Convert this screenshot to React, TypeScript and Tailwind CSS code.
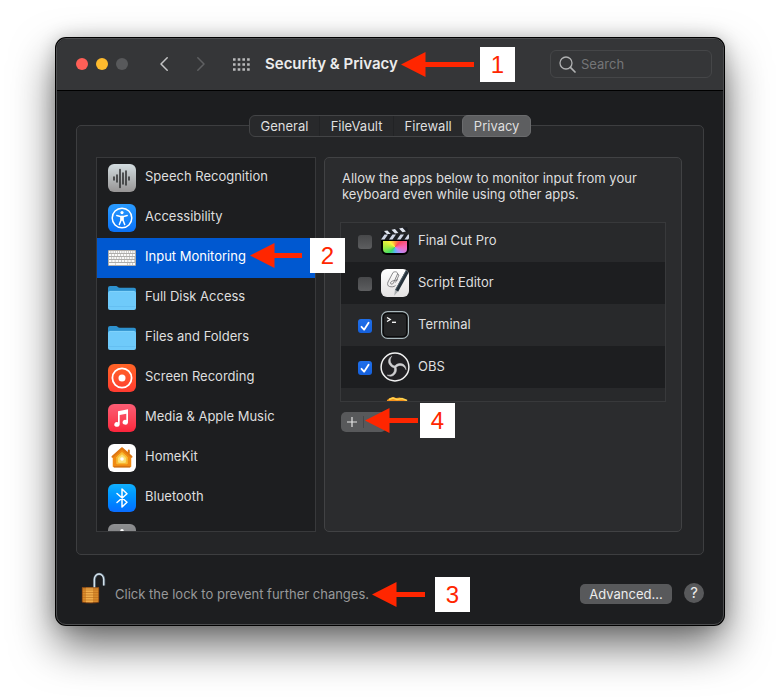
import { useState, type ReactNode } from "react";

function Tile({ className, children }: { className: string; children: ReactNode }) {
  return (
    <span className={`flex size-7 items-center justify-center overflow-hidden rounded-md ${className}`}>
      {children}
    </span>
  );
}

function SpeechIcon() {
  return (
    <Tile className="bg-linear-to-b from-[#d3dde0] to-[#979595]">
      <svg viewBox="0 0 28 28" className="size-7" stroke="#2a2b2d" strokeWidth="1.5" strokeLinecap="round">
        <path d="M6 13v3M9 11v7M12 5.5v18M15 9v11M18 7v14M21 13v3" />
      </svg>
    </Tile>
  );
}

function AccessibilityIcon() {
  return (
    <Tile className="bg-linear-to-b from-[#2a9bff] to-[#0a70f5]">
      <svg viewBox="0 0 28 28" className="size-7" fill="none" stroke="#fff" strokeLinecap="round" strokeLinejoin="round">
        <circle cx="14" cy="14" r="9.8" strokeWidth="1.5" />
        <circle cx="14" cy="8.6" r="1.6" fill="#fff" stroke="none" />
        <path d="M8.8 11.6l3.6.8h3.2l3.6-.8" strokeWidth="1.5" />
        <path d="M14 12.6v3.4M12.9 13v3.4l-1.6 4.2M15.1 13v3.4l1.6 4.2" strokeWidth="1.5" />
      </svg>
    </Tile>
  );
}

function KeyboardIcon() {
  return (
    <svg viewBox="0 0 28 28" className="size-7">
      <rect x="0" y="6" width="28" height="16" rx="1" fill="#aeadab" />
      <g stroke="#fafafa" strokeWidth="2.2">
        <path d="M1 8h26" strokeDasharray="1.6 .6" />
        <path d="M1 11h26" strokeDasharray="2.4 .6" />
        <path d="M1 14h26" strokeDasharray="2 .6" />
        <path d="M1 17h26" strokeDasharray="2.6 .6" />
        <path d="M1 20h6.5M8 20h11M19.6 20h2M22.2 20h2M24.8 20h2.2" />
      </g>
    </svg>
  );
}

function FolderIcon() {
  return (
    <svg viewBox="0 0 28 28" className="size-7">
      <path d="M0 4a2 2 0 0 1 2-2h6c1.600 0 2 1.800 3.800 1.800H26a2 2 0 0 1 2 2V12H0z" fill="#2e92cf" />
      <rect x="0" y="7" width="28" height="19" rx="2" fill="#6fcafa" />
      <path d="M.5 22.500h27" stroke="#63bdf0" strokeWidth=".8" />
      <path d="M1.500 7.300h25" stroke="#93dafc" strokeWidth=".6" />
    </svg>
  );
}

function RecordingIcon() {
  return (
    <Tile className="bg-linear-to-b from-[#ff6426] to-[#ff3a30]">
      <svg viewBox="0 0 28 28" className="size-7">
        <circle cx="14" cy="14" r="9.600" fill="none" stroke="#fff" strokeWidth="1.800" />
        <circle cx="14" cy="14" r="3.500" fill="#fff" />
      </svg>
    </Tile>
  );
}

function MusicIcon() {
  return (
    <Tile className="bg-linear-to-b from-[#fb5c74] to-[#fa233b]">
      <svg viewBox="0 0 28 28" className="size-7" fill="#fff">
        <path d="M10 7.300L20 5.200V18.500a2.700 2.400 0 1 1-1.700-2.500V9.700L11.700 11v9.600a2.700 2.400 0 1 1-1.700-2.400z" />
      </svg>
    </Tile>
  );
}

function HomeIcon() {
  return (
    <Tile className="bg-white">
      <svg viewBox="0 0 28 28" className="size-7" strokeLinejoin="round">
        <path d="M14 4.500L5.500 12v10.500h17V12z" fill="#f08a12" stroke="#f08a12" strokeWidth="1.500" />
        <path d="M4.500 12.800L14 4.300l9.500 8.500M20.800 6.500v3" fill="none" stroke="#dd7611" strokeWidth="2" strokeLinecap="round" />
        <path d="M6 22.800h16" stroke="#c96a12" strokeWidth="1.200" />
        <path d="M14 8.500L8.800 13v6.800h10.400V13z" fill="#f9bd35" stroke="#f9bd35" />
        <path d="M14 10.800L10.700 13.700v4.600h6.600v-4.600z" fill="#fbe27b" stroke="#fbe27b" />
        <circle cx="14" cy="15" r="1.800" fill="#fff" />
      </svg>
    </Tile>
  );
}

function BluetoothIcon() {
  return (
    <Tile className="bg-linear-to-b from-[#12b0fd] to-[#0a6cff]">
      <svg viewBox="0 0 28 28" className="size-7" fill="none" stroke="#fff" strokeWidth="1.500" strokeLinejoin="round" strokeLinecap="round">
        <path d="M9 9.500l10 8.800-5 4.700V5l5 4.700-10 8.800" />
      </svg>
    </Tile>
  );
}

function GearIcon() {
  return (
    <Tile className="bg-linear-to-b from-[#8f9092] to-[#6b6c6e]">
      <svg viewBox="0 0 28 28" className="size-7" fill="none" stroke="#fff">
        <circle cx="14" cy="16" r="7" strokeWidth="2" />
        <path d="M12.300 7.500V6.500a1.700 1.500 0 0 1 3.400 0v1z" fill="#fff" stroke="none" />
      </svg>
    </Tile>
  );
}

function FinalCutIcon() {
  return (
    <span className="flex size-7 flex-col">
      <svg viewBox="0 0 28 13" className="h-[13px] w-7">
        <path d="M0 4.500L26 0l1.500 4.500L1 9z" fill="#1d1f24" />
        <path d="M3 4l3.500 3.800 3.400-.6L6.500 3.400zM10.500 2.700L14 6.500l3.400-.6L14 2.100zM18 1.400l3.500 3.800 3.400-.6L21.500.8z" fill="#dfe4ee" />
        <path d="M0 7h28v6H0z" fill="#1d1f24" />
        <path d="M0 12.500L3.500 7.500H7L3.500 12.500zM8 12.500l3.500-5H15l-3.500 5zM16 12.500l3.500-5H23l-3.500 5zM23.500 12.500L27 7.500h1v3.800l-1 1.200z" fill="#cfd6e6" />
      </svg>
      <span className="flex flex-1 rounded-b-md bg-black p-0.5 pt-px">
        <span className="flex-1 rounded-b-sm bg-[conic-gradient(#ff9a3c,#fb4a5c,#f766b8,#b58cf5,#58b4f7,#3ddc6a,#a9ea3f,#fff23c,#ff9a3c)]" />
      </span>
    </span>
  );
}

function ScriptEditorIcon() {
  return (
    <Tile className="bg-linear-to-b from-white to-[#e4e2e2]">
      <svg viewBox="0 0 28 28" className="size-7" fill="none">
        <path d="M12 3.500c2-1.500 5-.5 4.500 1.500L12.500 14c-.8 1.500-3 1.500-3 0 0-1 1-1.500 2-2 2-1 4 0 5.500-1.500M12 3.500L7 13c-.8 2-.5 4 1.500 4.500M16 4.500l2 1.500-3.500 7.500M8.500 17.500c2 .5 4.500.5 6-1" stroke="#6d6d70" strokeWidth=".8" />
        <path d="M27 1L15.500 22" stroke="#26323b" strokeWidth="3.600" />
        <path d="M25.500 1L14.500 21" stroke="#5c6c76" strokeWidth=".8" />
        <path d="M14 20.800l3 1.800-3.800 4.200z" fill="#a9adb0" />
      </svg>
    </Tile>
  );
}

function TerminalIcon() {
  return (
    <svg viewBox="0 0 28 28" className="size-7" fill="none">
      <rect x=".6" y=".6" width="26.800" height="26.800" rx="6" fill="#0b0b0c" stroke="#a9b8bc" strokeWidth="1.200" />
      <rect x="3" y="3" width="22" height="22" rx="3.500" fill="#242526" />
      <path d="M6 6.500l3.300 2L6 10.500" stroke="#fff" strokeWidth="1.300" />
      <path d="M11 11.300h4" stroke="#fff" strokeWidth="1.300" />
    </svg>
  );
}

const obsBlade =
  "M10.800 3.200C7.600 5 6.800 8.200 8.200 11c1.100 2.200 3.200 3.600 5.600 3.900l.6-1.700c-2-.4-3.900-1.600-4.700-3.600-.9-2.300-.3-4.700 1.100-6.400z";

function ObsIcon() {
  return (
    <svg viewBox="0 0 28 28" className="size-7 overflow-visible" fill="none">
      <circle cx="14" cy="14" r="13.900" fill="#222124" stroke="#f2f2f2" strokeWidth="1.500" />
      <g fill="#d0d0d2" stroke="#d0d0d2" strokeWidth=".5">
        <path d={obsBlade} />
        <path d={obsBlade} transform="rotate(120 14 14)" />
        <path d={obsBlade} transform="rotate(240 14 14)" />
      </g>
    </svg>
  );
}

function OrangeIcon() {
  return (
    <svg viewBox="0 0 28 28" className="size-7">
      <path d="M6 5l3-2 3-1 3 1 4-.5 3 1.500 5 2v16H5z" fill="#f5931c" />
      <path d="M8 4.500l4-1.500 4 1.500 5-1 5 2" fill="none" stroke="#ffd44f" strokeWidth="1.500" />
    </svg>
  );
}

function LockIcon() {
  return (
    <svg viewBox="0 0 26 32" className="h-8 w-[26px]" fill="none">
      <path d="M14.500 16V7.500a4.700 5.500 0 0 1 9.400 0V13.500" stroke="#5e6f7d" strokeWidth="2.600" />
      <path d="M14.300 16V7.500a4.700 5.500 0 0 1 9.400 0V13.500" stroke="#d9e6ef" strokeWidth="1.300" />
      <path d="M2 15.500h17v14.300c-4 1.200-12 1.200-17 0z" fill="#d88a2b" />
      <path d="M6 15.500h7v15H6z" fill="#f0ad4a" />
      <path d="M2 18h17M2 20.500h17M2 23h17M2 25.500h17M2 28h17" stroke="#b56a1c" strokeWidth=".6" />
      <path d="M2 15.800h17M2.300 15.500v14.500M18.700 15.500v14.500M2 30.200c5 1 13 1 17 0" stroke="#8a4512" strokeWidth=".8" />
    </svg>
  );
}

const sections = [
  { name: "Speech Recognition", icon: <SpeechIcon /> },
  { name: "Accessibility", icon: <AccessibilityIcon /> },
  { name: "Input Monitoring", icon: <KeyboardIcon /> },
  { name: "Full Disk Access", icon: <FolderIcon /> },
  { name: "Files and Folders", icon: <FolderIcon /> },
  { name: "Screen Recording", icon: <RecordingIcon /> },
  { name: "Media & Apple Music", icon: <MusicIcon /> },
  { name: "HomeKit", icon: <HomeIcon /> },
  { name: "Bluetooth", icon: <BluetoothIcon /> },
  { name: "", icon: <GearIcon /> },
];

const apps = [
  { name: "Final Cut Pro", icon: <FinalCutIcon />, allowed: false },
  { name: "Script Editor", icon: <ScriptEditorIcon />, allowed: false },
  { name: "Terminal", icon: <TerminalIcon />, allowed: true },
  { name: "OBS", icon: <ObsIcon />, allowed: true },
  { name: "", icon: <OrangeIcon />, allowed: false },
];

const tabs = ["General", "FileVault", "Firewall", "Privacy"];

function AppRow({ name, icon, allowed }: { name: string; icon: ReactNode; allowed: boolean }) {
  return (
    <li className="odd:bg-[#28292b]">
      <label className="flex h-[42px] items-center pl-[17px]">
        <span className="mr-[9px] grid pt-0.5">
          <input
            type="checkbox"
            defaultChecked={allowed}
            aria-label={name || "App"}
            className="peer col-start-1 row-start-1 size-3.5 appearance-none rounded-[3px] bg-linear-to-b from-[#47484a] to-[#5d5e60] checked:from-[#1f6fea] checked:to-[#1560dc]"
          />
          <svg
            viewBox="0 0 14 14"
            className="pointer-events-none invisible col-start-1 row-start-1 size-3.5 peer-checked:visible"
            fill="none"
            stroke="#fff"
            strokeWidth="1.800"
            strokeLinecap="round"
            strokeLinejoin="round"
          >
            <path d="M3.500 7.800l2.600 2.900 4.500-7" />
          </svg>
        </span>
        {icon}
        <span className="ml-[9px] pb-0.5">{name}</span>
      </label>
    </li>
  );
}

function Callout({ label, length, className }: { label: string; length: number; className: string }) {
  return (
    <div className={`pointer-events-none absolute z-20 flex items-center ${className}`}>
      <svg width={length} height="25" viewBox={`0 0 ${length} 25`} fill="#ff2600">
        <path d={`M0 12.500L24.500 0v10H${length}v5H24.500v10z`} />
      </svg>
      <span className="flex size-[35px] items-center justify-center bg-white font-['Liberation_Sans',sans-serif] text-2xl text-[#ff2600]">
        {label}
      </span>
    </div>
  );
}

export default function App() {
  const [tab, setTab] = useState("Privacy");
  const [section, setSection] = useState("Input Monitoring");

  return (
    <main className="min-h-screen overflow-hidden bg-white px-14 pt-[38px] pb-[74px] font-['Inter',sans-serif] text-[13px] leading-4 text-[#dfdfdf]">
      <div className="relative rounded-[10px] border border-[#4c4d4f] bg-[#1d1e20] shadow-[0_0_0_1px_#000,0_20px_44px_rgba(0,0,0,0.6),0_0_18px_rgba(0,0,0,0.2)]">
        <header className="flex h-[52px] items-center rounded-t-[9px] border-b border-black bg-[#353638] pr-[11px] pb-px pl-[19px]">
          <div className="flex gap-2">
            <button aria-label="Close" className="size-3 rounded-full bg-[#ff5f57]" />
            <button aria-label="Minimize" className="size-3 rounded-full bg-[#febb2e]" />
            <button aria-label="Zoom" disabled className="size-3 rounded-full bg-[#58595b]" />
          </div>
          <button aria-label="Back" className="ml-8">
            <svg viewBox="0 0 8 14" className="h-3.5 w-2" fill="none" stroke="#c3c4c5" strokeWidth="1.500" strokeLinecap="round" strokeLinejoin="round">
              <path d="M7.200.8L1 7l6.200 6.200" />
            </svg>
          </button>
          <button aria-label="Forward" disabled className="ml-[29px]">
            <svg viewBox="0 0 8 14" className="h-3.5 w-2" fill="none" stroke="#5f6062" strokeWidth="1.500" strokeLinecap="round" strokeLinejoin="round">
              <path d="M.8.8L7 7 .8 13.200" />
            </svg>
          </button>
          <button aria-label="Show all" className="ml-7">
            <svg viewBox="0 0 18 13" className="h-[13px] w-[18px]" stroke="#b9babb" strokeWidth="2.600">
              <path d="M0 1.500h18M0 6.500h18M0 11.500h18" strokeDasharray="2.600 2.100" />
            </svg>
          </button>
          <h1 className="ml-3.5 flex-1 text-[15px] font-semibold text-[#ececec]">Security &amp; Privacy</h1>
          <label className="flex h-7 w-[162px] items-center gap-[5px] rounded-md border border-[#454648] px-2">
            <svg viewBox="0 0 17 17" className="size-[17px] shrink-0" fill="none" stroke="#b0b1b2" strokeWidth="1.300" strokeLinecap="round">
              <circle cx="7" cy="7" r="6" />
              <path d="M11.400 11.400l4.600 4.600" strokeWidth="1.700" />
            </svg>
            <input
              type="search"
              aria-label="Search"
              placeholder="Search"
              className="min-w-0 flex-1 bg-transparent outline-none placeholder:text-[#747577]"
            />
          </label>
        </header>

        <div className="px-[19px] pt-6">
          <div role="tablist" className="relative z-10 mx-auto -mb-3 flex h-[22px] w-[282px] items-stretch rounded-md border border-[#434446] bg-[#28292b]">
            {tabs.map((name, i) => (
              <button
                key={name}
                role="tab"
                aria-selected={tab === name}
                onClick={() => setTab(name)}
                className={`flex-auto px-2 pb-px ${tab === name ? "-my-px -mr-px rounded-md border border-[#6a6b6d] bg-[#5d5e60]" : i > 0 ? "border-l border-[#222325]" : ""}`}
              >
                {name}
              </button>
            ))}
          </div>

          <div className="flex gap-2 rounded-[5px] border border-[#3d3e40] bg-[#242527] pt-[31px] pr-[21px] pb-[22px] pl-[19px]">
            <ul className="h-[375px] w-[220px] shrink-0 overflow-y-auto border border-[#38393b] bg-[#1d1e20] [scrollbar-width:none]">
              {sections.map(({ name, icon }) => (
                <li key={name}>
                  <button
                    aria-label={name || "More"}
                    onClick={() => setSection(name)}
                    className={`flex h-10 w-full items-center gap-[9px] pl-[11px] text-left ${section === name ? "bg-[#0058d0] text-white" : ""}`}
                  >
                    {icon}
                    <span className="pb-1">{name}</span>
                  </button>
                </li>
              ))}
            </ul>

            <section className="min-w-0 flex-1 rounded-[5px] border border-[#414244] bg-[#2b2c2e] px-[15px] pt-3">
              <p className="max-w-[310px] pl-0.5">
                Allow the apps below to monitor input from your keyboard even while using other apps.
              </p>
              <div className="mt-5 h-[180px] overflow-hidden border border-[#38393b] bg-[#1d1e20]">
                <ul className="-mt-[3px]">
                  {apps.map((app) => (
                    <AppRow key={app.name} {...app} />
                  ))}
                </ul>
              </div>
              <div className="mt-2.5 ml-px flex h-5 w-fit items-center rounded-[5px] bg-[#58595b]">
                <button aria-label="Add app" className="flex h-3 w-[23px] items-center justify-center border-r border-[#47484a]">
                  <svg viewBox="0 0 10 10" className="size-2.5" stroke="#e4e4e4" strokeWidth="1.200">
                    <path d="M5 0v10M0 5h10" />
                  </svg>
                </button>
                <button aria-label="Remove app" className="flex h-3 w-[22px] items-center justify-center">
                  <svg viewBox="0 0 10 10" className="size-2.5" stroke="#8b8c8e" strokeWidth="1.200">
                    <path d="M0 5h10" />
                  </svg>
                </button>
              </div>
            </section>
          </div>

          <footer className="flex items-end pt-[17px] pb-5 pl-1">
            <LockIcon />
            <p className="ml-[9px] flex-1 pb-0.5 text-[#98999a]">Click the lock to prevent further changes.</p>
            <button className="h-5 w-[92px] rounded-[5px] bg-[#58595b] pb-px text-[#ececec]">Advanced...</button>
            <button aria-label="Help" className="mb-px ml-3 size-5 rounded-full bg-[#58595b] text-[15px] text-[#ececec]">
              ?
            </button>
          </footer>
        </div>

        <Callout label="1" length={73} className="top-2 left-[344px] gap-1.5" />
        <Callout label="2" length={52} className="top-[199px] left-[193px] gap-2" />
        <Callout label="3" length={53} className="top-[538px] left-[315px] gap-2.5" />
        <Callout label="4" length={53} className="top-[364px] left-[308px] gap-0.5" />
      </div>
    </main>
  );
}
